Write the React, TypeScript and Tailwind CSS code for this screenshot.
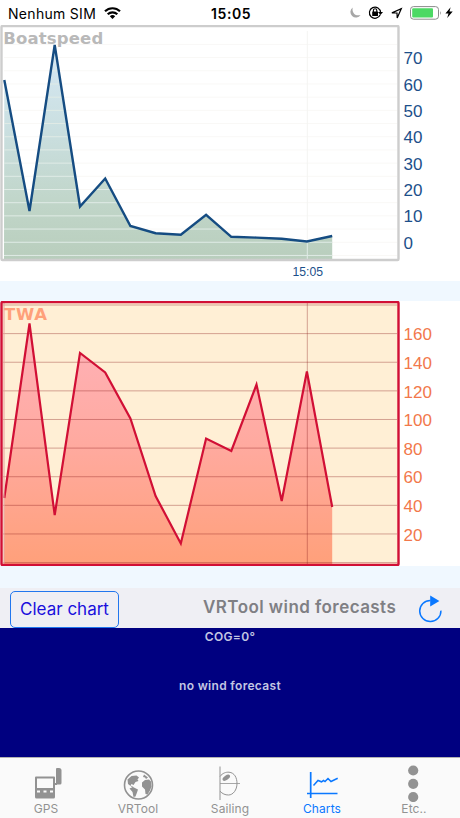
import type { ReactNode } from "react";

const speed = [80, 211, 45, 206.5, 178.5, 226, 233.2, 234.8, 214.8, 236.8, 237.6, 238.8, 241.5, 236];
const twa = [498, 323.5, 515, 353, 372.5, 418.5, 496, 543.5, 438.5, 451, 384.5, 501, 371.5, 507];

const toLine = (ys: number[], top: number) =>
  ys.map((y, i) => `${(4.3 + i * 25.22).toFixed(1)},${y - top}`).join(" ");

const speedTicks = [70, 60, 50, 40, 30, 20, 10, 0];
const twaTicks = [160, 140, 120, 100, 80, 60, 40, 20];
const speedGrid = Array.from({ length: 17 }, (_, i) => 19.4 + i * 13.19);
const twaGrid = Array.from({ length: 10 }, (_, i) => 4 + i * 28.62);

function StatusBar() {
  return (
    <header className="relative flex h-[25px] items-center justify-between bg-white pl-2 pr-[5px] text-black">
      <div className="flex items-center gap-[9px]">
        <span className="w-[87px] whitespace-nowrap pt-px text-[14px] tracking-[0.3px]">Nenhum SIM</span>
        <svg width="17" height="12" viewBox="0 0 17 12" fill="none" stroke="currentColor" strokeWidth="2.2">
          <path d="M1 4.3a10.8 10.8 0 0 1 15 0M3.7 7.2a7 7 0 0 1 9.6 0" />
          <path d="M8.5 12 5.8 9.2a4 4 0 0 1 5.4 0z" fill="currentColor" stroke="none" />
        </svg>
      </div>
      <span className="absolute left-[211px] top-[3px] text-[14px] font-semibold tracking-[0.6px]">
        15:05
      </span>
      <svg width="106" height="16" viewBox="350 5 106 16">
        <path d="M353.800 7.500A5.500 5.500 0 1 0 361.600 14.900C356.500 16.800 352.400 12.500 353.800 7.500z" fill="#a7a7a7" />
        <path d="M381.200 14.800a5.600 5.600 0 1 1 .4-2.300" fill="none" stroke="#000" strokeWidth="1.2" />
        <path d="M379 12h5l-2.500 3z" />
        <rect x="373.200" y="11.600" width="5.800" height="4.500" rx=".5" />
        <path d="M374.400 12v-1.600a1.700 1.700 0 0 1 3.400 0V12" fill="none" stroke="#000" strokeWidth="1.1" />
        <path d="m392.900 12.900 9.400-4.300-4.100 9.300-.2-4.900z" fill="none" stroke="#000" strokeWidth="1.2" />
        <rect x="411.500" y="6.600" width="28" height="12.600" rx="3" fill="#fff" stroke="#8b8b8b" />
        <rect x="413.200" y="8.300" width="20.800" height="9.200" rx="1" fill="#4cd964" />
        <path d="M441 11v4q1.800-2 0-4" fill="#8b8b8b" />
        <path d="m451.600 7.300-5.200 6.200h3.100l-1.300 4.500 5.500-6.500h-3.200z" />
      </svg>
    </header>
  );
}

function SpeedChart() {
  const line = toLine(speed, 25);
  return (
    <svg width="460" height="256" viewBox="0 0 460 256" className="block bg-white">
      <defs>
        <linearGradient id="speedFill" gradientUnits="userSpaceOnUse" x1="0" y1="20" x2="0" y2="235">
          <stop offset="0" stopColor="#d6e8f4" />
          <stop offset=".4" stopColor="#cadfe0" />
          <stop offset=".75" stopColor="#c0d5c8" />
          <stop offset="1" stopColor="#b9cebd" />
        </linearGradient>
        <clipPath id="speedClip">
          <polygon points={`4,235 ${line} 332.2,235`} />
        </clipPath>
      </defs>
      <g stroke="#f9f8f6" strokeWidth="1">
        {speedGrid.map((y) => (
          <path key={y} d={`M4 ${y}H397`} />
        ))}
        <path d="M307.3 6V235" stroke="#f4f4f2" />
      </g>
      <polygon points={`4,235 ${line} 332.2,235`} fill="url(#speedFill)" />
      <g clipPath="url(#speedClip)" stroke="#e0ebe6" strokeWidth="1">
        {speedGrid.map((y) => (
          <path key={y} d={`M4 ${y}H333`} />
        ))}
        <path d="M307.3 200V235" />
      </g>
      <text x="3.2" y="19.3" fill="#b9b9b9" className="font-['DejaVu_Sans',sans-serif] text-[16.5px] font-bold" textLength="100">
        Boatspeed
      </text>
      <polyline points={line} fill="none" stroke="#154c82" strokeWidth="2.4" />
      <rect x="1.500" y="1" width="397" height="234" rx="1" fill="none" stroke="#cdcdcd" strokeWidth="2.4" />
      <g fill="#1c4f8a" className="font-['Liberation_Sans',sans-serif] text-[17px]">
        {speedTicks.map((t, i) => (
          <text key={t} x="403.600" y={39.3 + i * 26.35}>
            {t}
          </text>
        ))}
        <text x="292.500" y="250.700" className="text-[12.2px]">
          15:05
        </text>
      </g>
    </svg>
  );
}

function TwaChart() {
  const line = toLine(twa, 301);
  return (
    <svg width="460" height="265" viewBox="0 0 460 265" className="block bg-white">
      <defs>
        <linearGradient id="twaFill" gradientUnits="userSpaceOnUse" x1="0" y1="20" x2="0" y2="264">
          <stop offset="0" stopColor="#ffb2ba" />
          <stop offset=".5" stopColor="#ffaaa0" />
          <stop offset="1" stopColor="#ffa07a" />
        </linearGradient>
      </defs>
      <rect x="1" y="1" width="397" height="263" fill="#ffefd5" />
      <polygon points={`4,264 ${line} 332.2,264`} fill="url(#twaFill)" />
      <g stroke="#8b1a1a" strokeOpacity=".37" strokeWidth="1">
        {twaGrid.map((y) => (
          <path key={y} d={`M3 ${y}H397`} />
        ))}
        <path d="M307.3 2V263" />
      </g>
      <text x="4" y="18.700" fill="#ffa07a" className="font-['DejaVu_Sans',sans-serif] text-[16.5px] font-bold" textLength="43">
        TWA
      </text>
      <polyline points={line} fill="none" stroke="#d10f35" strokeWidth="2.2" />
      <path d="M4 2V263" stroke="#e3a29c" strokeWidth="1" />
      <rect x="1.500" y="1" width="397" height="263" rx="1" fill="none" stroke="#d10f35" strokeWidth="2.400" />
      <g fill="#f2784b" className="font-['Liberation_Sans',sans-serif] text-[17px]">
        {twaTicks.map((t, i) => (
          <text key={t} x="403.600" y={39.400 + i * 28.600}>
            {t}
          </text>
        ))}
      </g>
    </svg>
  );
}

function Toolbar() {
  return (
    <div className="flex h-10 items-center bg-[#efeff4] pl-[10px]">
      <button className="mt-[2px] h-[37px] w-[109px] whitespace-nowrap rounded-[5px] border border-[#2277ee] pt-[2px] text-[17px] text-[#1a10dd]">
        Clear chart
      </button>
      <h2 className="ml-[84px] w-[195px] whitespace-nowrap text-[17px] font-semibold tracking-[0.43px] text-[#7f7f84]">
        VRTool wind forecasts
      </h2>
      <svg width="24" height="28" viewBox="418 596 24 28" className="ml-5 mt-[2px]">
        <path d="M430.500 601.400a10.600 10.600 0 1 0 10.400 10.200" fill="none" stroke="#0a78ff" strokeWidth="1.500" />
        <path d="m430.200 596.600 9.200 5.500-9.200 5.400z" fill="#0a78ff" />
      </svg>
    </div>
  );
}

function Tab({ label, active, children }: { label: string; active?: boolean; children: ReactNode }) {
  return (
    <button className={`flex flex-col items-center ${active ? "text-[#0a78ff]" : "text-[#929292]"}`}>
      <svg width="44" height="44" viewBox="0 0 44 44" fill="currentColor" className="shrink-0">
        {children}
      </svg>
      <span className="-mt-px text-[12px] leading-4 tracking-[0.1px]">{label}</span>
    </button>
  );
}

function TabBar() {
  return (
    <nav className="grid h-[61px] grid-cols-5 border-t border-[#b2b2b2] bg-[#fafafa]">
      <Tab label="GPS">
        <path
          fillRule="evenodd"
          d="M12 18.500h18q1 0 1 1V39q0 1.500-1.500 1.500h-17Q11 40.500 11 39V19.500q0-1 1-1zM13 20.500v9.500h16v-9.500zM13 32.500v2h3v-2zM19.500 32.500v2h3v-2zM26 32.500v2h3v-2z"
        />
        <path d="M33 10h2q2.500 0 2.500 2.500V25q0 1.500-1.500 1.500h-4V11q0-1 1-1z" />
        <path d="M30 25h3v2h-3z" />
      </Tab>
      <Tab label="VRTool">
        <circle cx="22.500" cy="27" r="14" fill="none" stroke="currentColor" strokeWidth="1.600" />
        <path d="M11.500 21.500 15.500 18l5-.5 2.500 2-1.500 2 1 1.500-3 1-2 3-2-1-1 1.500 3 1.500-1 .5-4.500-3.500zM13.500 30.500l3.500-1.500 5 2.500-1 3-1.500 4-2 .5-1-5zM27 19l1-2.500 4 3-2 1.500-1-1.500zM26 24.500l3-2.500 4-.5 2 2 .5 5-1.500 4-2.500 4-2-.5-.5-4.500-3-3z" />
      </Tab>
      <Tab label="Sailing">
        <g fill="none" stroke="currentColor">
          <path d="M12 8.500v33.500" strokeWidth="1" />
          <path d="M12 25.500h20" strokeWidth=".8" />
          <path d="M12 18.500c2.500-3.500 6-4.500 9-4.300 5.500.5 8 5.500 8 11.300 0 6.500-4 11.500-8.500 11.500-3.500 0-6-1.200-8.500-3.800" />
        </g>
        <ellipse cx="18.300" cy="19.700" rx="4.300" ry="2.200" transform="rotate(-36 18.300 19.700)" />
      </Tab>
      <Tab label="Charts" active>
        <g fill="none" stroke="currentColor">
          <path d="M10.700 14v26M7 35.500h30.500" strokeWidth="1.700" />
          <path d="m13.500 27.500 4.500-5 3.500 1.300 2-1.300 1.500 1 3-3 3 3 6.700-3.200" strokeWidth="1.500" />
        </g>
      </Tab>
      <Tab label="Etc..">
        <circle cx="21.200" cy="12.500" r="5.100" />
        <circle cx="21.200" cy="25.800" r="5.100" />
        <circle cx="21.200" cy="39" r="5.100" />
      </Tab>
    </nav>
  );
}

export default function App() {
  return (
    <main className="flex h-[818px] w-[460px] flex-col overflow-hidden bg-[#f0f8ff] font-['Inter',sans-serif]">
      <StatusBar />
      <SpeedChart />
      <div className="h-5" />
      <TwaChart />
      <div className="h-[22px]" />
      <Toolbar />
      <section className="flex h-[129px] flex-col items-center bg-[#000080] text-[12px] font-semibold leading-4 tracking-[0.32px] text-[#c3c6e3]">
        <p className="mt-px">COG=0°</p>
        <p className="mt-[33px]">no wind forecast</p>
      </section>
      <TabBar />
    </main>
  );
}
